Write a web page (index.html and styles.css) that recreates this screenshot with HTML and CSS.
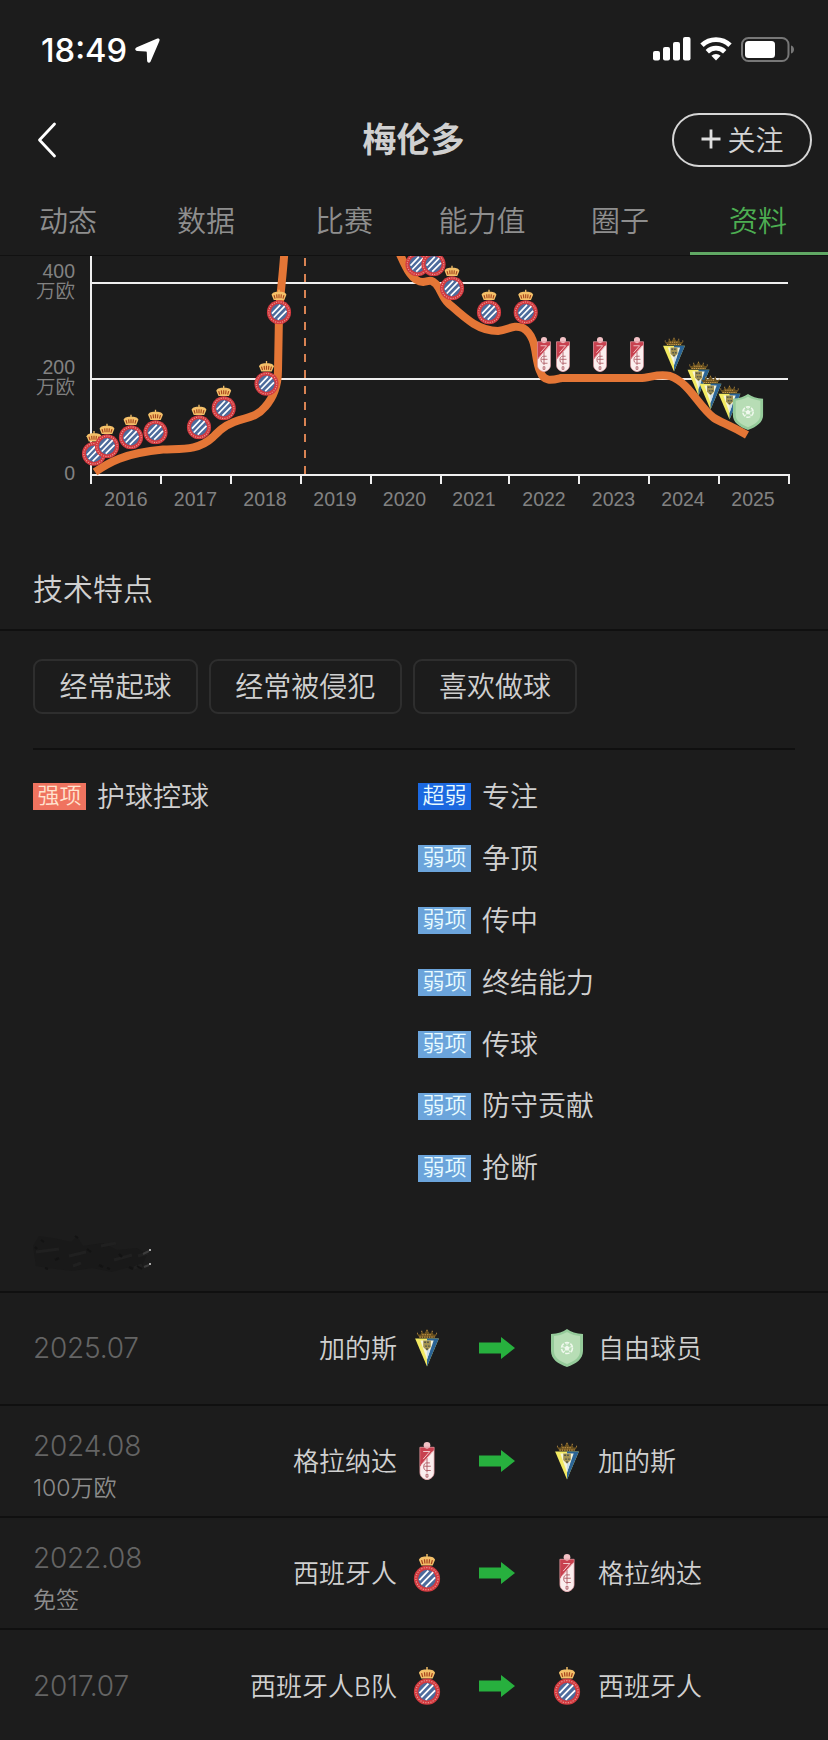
FILE: index.html
```html
<!DOCTYPE html>
<html lang="zh-CN">
<head>
<meta charset="utf-8">
<title>梅伦多</title>
<link rel="stylesheet" href="styles.css">
</head>
<body>
<svg class="defs" width="0" height="0" aria-hidden="true">
  <symbol id="espanyol" viewBox="0 0 28 40">
    <path d="M8 12 5.500 6C7 2.500 10 2.500 14 2.500s7 0 8.500 3.500L20 12Z" fill="#f4c069"/>
    <path d="M14 0v5" stroke="#f4c069" stroke-width="1.500"/>
    <path d="M9.500 10.500 8.300 6.500M11.800 10 11.300 5.500M14 10V5.500M16.200 10l.5-4.500M18.500 10.500l1.200-4" stroke="#a8441d" stroke-width="1.300" fill="none"/>
    <circle cx="14" cy="26" r="13.800" fill="#d33a40"/>
    <circle cx="14" cy="26" r="11.700" fill="none" stroke="#eaa39a" stroke-width="1.200" stroke-dasharray="1.200 1.500"/>
    <circle cx="14" cy="26" r="9.300" fill="#4c6b9c"/>
    <path d="M6 27.500 15.500 17.500M8 32 20.500 19M12.500 34.500 22.500 24.500" stroke="#fff" stroke-width="1.900"/>
  </symbol>
  <symbol id="granada" viewBox="0 0 16 40">
    <path d="M.5 5.500h15V32c0 4-3 7-7.500 8-4.500-1-7.500-4-7.500-8Z" fill="#fbeeee"/>
    <path d="M.5 5.500h15v3L.5 26Z" fill="#c8414f"/>
    <circle cx="8" cy="3.500" r="3.500" fill="#f2c1c5"/>
    <path d="M4 10h7L4 18M14 10 2 24" stroke="#f3cfd1" fill="none"/>
    <path d="M8 17v15M11 22H7.500c-4 0-4 8 0 8H12M5 25.500h7M7 34h2v3H7z" stroke="#a85059" stroke-width=".9" fill="none"/>
    <path d="M.5 5.500h15V32c0 4-3 7-7.500 7.500-4.500-.5-7.500-3.500-7.500-7.500Z" fill="none" stroke="#d98b93" stroke-width=".7"/>
  </symbol>
  <symbol id="cadiz" viewBox="0 0 26 40">
    <path d="M.5 10h25L13 39.500Z" fill="#f3ea62"/>
    <path d="M25.500 10H13v29.500Z" fill="#2b6496"/>
    <path d="M6 12h14l-7 20Z" fill="#f5f3da"/>
    <path d="M13 19v13l3-9Z" fill="#c9dded"/>
    <path d="M9 12h8v7l-4 4-4-4Z" fill="#a39250"/>
    <path d="M10 14h6M11 18h5M12 21h3" stroke="#55584a" stroke-width="1.500" stroke-dasharray="2 1"/>
    <path d="M5 9 2 5 6 6 7.500 2.500 10 5l3-4.500 3 4.500 2.500-2.500L20 6l4-1L21 9Z" fill="#6b5220"/>
    <path d="M5 8.500h16M2.500 4.500h1M7 2.500h1M12.500 1.500h1M18 2.500h1M22.500 4.500h1M8 6h10" stroke="#c9994a" stroke-width="1.200" stroke-dasharray="1.500 1"/>
  </symbol>
  <symbol id="free" viewBox="0 0 32 38">
    <path d="M16 0c4 3 9 4.500 16 5v17c0 8-7 13-16 16C7 35 0 30 0 22V5c7-.5 12-2 16-5Z" fill="#95cb9a"/>
    <path d="M16 3c4 2.500 8 3.500 13 4v15c0 6-5 10-13 13C8 32 3 28 3 22V7c5-.5 9-1.500 13-4Z" fill="#b7ddb5"/>
    <circle cx="16" cy="19" r="5.500" fill="none" stroke="#f0f9ee" stroke-width="1.600" stroke-dasharray="4.500 1.260"/>
    <path d="m16 16.500 2.600 1.900-1 3.100h-3.200l-1-3.100Z" fill="#f0f9ee"/>
    <path d="M16 14v2M11 17.500l2.500.8M21 17.500l-2.500.8M13 23l1-1.700M19 23l-1-1.700" stroke="#f0f9ee"/>
  </symbol>
  <symbol id="arrow" viewBox="0 0 36 22">
    <path d="M0 5.500h22V0l14 11-14 11v-5.500H0Z" fill="#27b03e"/>
  </symbol>
</svg>

<header class="status">
  <div class="clock">18:49
    <svg width="25" height="25" viewBox="0 0 25 25"><path d="M22.300.6 1.800 9.200C-.5 10.300-.2 12.600 2.200 12.900l8.600.6c.7.100 1 .4 1 1.100l.3 8.200c.2 2.400 2.700 2.700 3.600.5L24.400 2.900C25.100 1.100 24-.1 22.300.6Z" fill="#fff"/></svg>
  </div>
  <div class="indicators">
    <svg width="38" height="24" viewBox="0 0 38 24" fill="#fff"><rect y="14" width="7" height="9.500" rx="2"/><rect x="10" y="10" width="7" height="13.500" rx="2"/><rect x="20" y="5" width="7" height="18.500" rx="2"/><rect x="30" width="7.500" height="23.500" rx="2"/></svg>
    <svg width="32" height="24" viewBox="0 0 32 24" fill="none" stroke="#fff" stroke-width="4.800"><path d="M2 8.300a20 20 0 0 1 28 0"/><path d="M7.300 14.700a12.500 12.500 0 0 1 17.400 0"/><path d="m16 23.500-4.600-4.700a7 7 0 0 1 9.200 0Z" fill="#fff" stroke="none"/></svg>
    <svg width="54" height="25" viewBox="0 0 54 25"><rect x="1" y="1" width="46.500" height="23" rx="6.500" fill="none" stroke="#777" stroke-width="2"/><rect x="4" y="4" width="30" height="17" rx="3.500" fill="#fff"/><path d="M50 8.500c4 1 4 7 0 8Z" fill="#777"/></svg>
  </div>
</header>

<nav class="titlebar">
  <svg class="back" width="20" height="36" viewBox="0 0 20 36"><path d="M17.500 2 2.500 18l15 16" fill="none" stroke="#fff" stroke-width="2.800" stroke-linecap="round" stroke-linejoin="round"/></svg>
  <h1>梅伦多</h1>
  <button class="follow"><svg width="20" height="20" viewBox="0 0 20 20"><path d="M10 .5v19M.5 10h19" stroke="#e0e0e0" stroke-width="2.800"/></svg><span>关注</span></button>
</nav>

<nav class="tabs">
  <a>动态</a><a>数据</a><a>比赛</a><a>能力值</a><a>圈子</a><a class="active">资料</a>
</nav>

<section class="chart">
<svg width="828" height="264" viewBox="0 256 828 264">
  <path d="M91 256v228M91 283h697M91 379h697M91 475h699" stroke="#efefef" stroke-width="2" fill="none"/>
  <path d="M161 475v9M231 475v9M301 475v9M371 475v9M441 475v9M509 475v9M579 475v9M649 475v9M719 475v9M789 475v9" stroke="#efefef" stroke-width="2"/>
  <path d="M305 258v217" stroke="#d98353" stroke-width="2" stroke-dasharray="8 8"/>
  <g fill="none" stroke="#e47636" stroke-width="8">
    <path d="M95 472C108 463 124 453 163 449.500C181 448.500 198 451 213 437C219 431 224 426 234 422C246 417 256 418 265 407C274 397 278 386 278 370L279 315C280 295 283 275 284.500 250"/>
    <path d="M398 250C405 265 411 282 423 282C431 281 430 279 436 284C441 290 442 297 448 303C465 318 478 331 498 331C509 330 513 324 523 328C538 337 534 358 540 371C544 383 553 380 561 378H640C650 378 658 373 670 376C690 383 698 406 714 418C722 423 728 424 747 435"/>
  </g>
  <g id="pins">
    <use href="#espanyol" x="81.500" y="431" width="25" height="35"/>
    <use href="#espanyol" x="94.500" y="423.500" width="25" height="35"/>
    <use href="#espanyol" x="118.500" y="414.500" width="25" height="35"/>
    <use href="#espanyol" x="143" y="409.500" width="25" height="35"/>
    <use href="#espanyol" x="186.500" y="404.500" width="25" height="35"/>
    <use href="#espanyol" x="211.200" y="385.500" width="25" height="35"/>
    <use href="#espanyol" x="254" y="361" width="25" height="35"/>
    <use href="#espanyol" x="266.500" y="289.500" width="25" height="35"/>
    <use href="#espanyol" x="405" y="241.500" width="25" height="35"/>
    <use href="#espanyol" x="421" y="241.500" width="25" height="35"/>
    <use href="#espanyol" x="439.500" y="265.500" width="25" height="35"/>
    <use href="#espanyol" x="476.500" y="289.500" width="25" height="35"/>
    <use href="#espanyol" x="513.200" y="289.500" width="25" height="35"/>
    <use href="#granada" x="537" y="337" width="14" height="35"/>
    <use href="#granada" x="556" y="337" width="14" height="35"/>
    <use href="#granada" x="593" y="337" width="14" height="35"/>
    <use href="#granada" x="630" y="337" width="14" height="35"/>
    <use href="#cadiz" x="662.500" y="337" width="23" height="35"/>
    <use href="#cadiz" x="687" y="361" width="23" height="35"/>
    <use href="#cadiz" x="699" y="375" width="23" height="35"/>
    <use href="#cadiz" x="718" y="385" width="23" height="35"/>
    <use href="#free" x="732.500" y="394" width="31" height="36"/>
  </g>
  <g class="ylabels"><text x="75" y="278">400</text><text x="75" y="298">万欧</text><text x="75" y="374">200</text><text x="75" y="394">万欧</text><text x="75" y="480">0</text></g>
  <g class="xlabels"><text x="126" y="506">2016</text><text x="195.500" y="506">2017</text><text x="265" y="506">2018</text><text x="335" y="506">2019</text><text x="404.500" y="506">2020</text><text x="474" y="506">2021</text><text x="544" y="506">2022</text><text x="613.500" y="506">2023</text><text x="683" y="506">2024</text><text x="753" y="506">2025</text></g>
</svg>
</section>

<h2 class="heading">技术特点</h2>

<section class="traits">
  <div class="chips"><span>经常起球</span><span>经常被侵犯</span><span>喜欢做球</span></div>
  <div class="skills">
    <ul>
      <li><b class="strong">强项</b>护球控球</li>
    </ul>
    <ul>
      <li><b class="poor">超弱</b>专注</li>
      <li><b>弱项</b>争顶</li>
      <li><b>弱项</b>传中</li>
      <li><b>弱项</b>终结能力</li>
      <li><b>弱项</b>传球</li>
      <li><b>弱项</b>防守贡献</li>
      <li><b>弱项</b>抢断</li>
    </ul>
  </div>
</section>

<div class="smudge">
  <svg width="122" height="42" viewBox="0 0 122 42">
    <path d="M2 14 8 4l14 2 18 4 6-6 6 10 20-3 14 7 20-2 10 6-5 12-16 2-14 4-20-4-20 3-24-3-12-2Z" fill="#191919"/>
    <path d="M5 20 28 17M38 24l17-4M70 14l15-3M83 28l18-5M107 24l10-3M42 34l8-3M103 36l8-3" stroke="#202020" stroke-width="3"/>
    <path d="M10 8l3 2M4 15l2 2M24 28l4-2M44 4l3 2M56 17l4 3M68 33l4 2M88 22l3 3M98 35l4 2M76 36l3 1M14 36l3 1M106 34l5 3" stroke="#131313" stroke-width="2"/>
    <path d="m112 22 6-3M113 35l5-2" stroke="#3c3c3c" stroke-width="2"/>
    <path d="M118 18h2M118 32h2" stroke="#aaa" stroke-width="2"/>
  </svg>
</div>

<section class="transfers">
  <div class="row">
    <div class="when"><time>2025.07</time></div><span class="from">加的斯</span>
    <svg class="crest"><use href="#cadiz"/></svg><svg class="arrow"><use href="#arrow"/></svg><svg class="crest"><use href="#free"/></svg>
    <span class="to">自由球员</span>
  </div>
  <div class="row">
    <div class="when"><time>2024.08</time><small>100万欧</small></div><span class="from">格拉纳达</span>
    <svg class="crest"><use href="#granada"/></svg><svg class="arrow"><use href="#arrow"/></svg><svg class="crest"><use href="#cadiz"/></svg>
    <span class="to">加的斯</span>
  </div>
  <div class="row">
    <div class="when"><time>2022.08</time><small>免签</small></div><span class="from">西班牙人</span>
    <svg class="crest"><use href="#espanyol"/></svg><svg class="arrow"><use href="#arrow"/></svg><svg class="crest"><use href="#granada"/></svg>
    <span class="to">格拉纳达</span>
  </div>
  <div class="row">
    <div class="when"><time>2017.07</time></div><span class="from">西班牙人B队</span>
    <svg class="crest"><use href="#espanyol"/></svg><svg class="arrow"><use href="#arrow"/></svg><svg class="crest"><use href="#espanyol"/></svg>
    <span class="to">西班牙人</span>
  </div>
</section>
</body>
</html>
```
FILE: styles.css
```css
* { box-sizing: border-box; }
body {
  margin: 0;
  width: 828px;
  height: 1740px;
  overflow: hidden;
  background: #1c1c1c;
  color: #d0d0d0;
  font-family: Inter, "Noto Sans CJK SC", sans-serif;
  font-weight: 350;
}
svg { display: block; flex: none; }
.defs { display: none; }
.status {
  height: 100px;
  display: flex;
  justify-content: space-between;
  padding: 0 33px 0 41px;
}
.clock {
  display: flex;
  align-items: center;
  gap: 8px;
  height: 100px;
  font: 550 32.700px/1 Inter, sans-serif;
  color: #fff;
}
.indicators { display: flex; gap: 9px; padding-top: 37px; }
.titlebar {
  height: 84px;
  padding: 0 16px 4px 37px;
  display: grid;
  grid-template-columns: 140px 1fr 140px;
  align-items: center;
}
.titlebar h1 {
  margin: 0;
  padding-right: 22px;
  text-align: center;
  font-size: 34px;
  font-weight: 600;
  line-height: 50px;
}
.follow {
  width: 140px;
  height: 54px;
  padding: 0 0 2px 1px;
  border: 2px solid #d6d6d6;
  border-radius: 27px;
  background: none;
  display: flex;
  align-items: center;
  justify-content: center;
  gap: 6px;
  color: #d4d4d4;
  font: 350 28px/40px "Noto Sans CJK SC", sans-serif;
}
.tabs {
  height: 72px;
  display: grid;
  grid-template-columns: repeat(6, 138px);
  border-bottom: 1px solid #111;
}
.tabs a {
  height: 71px;
  padding: 17px 2px 0 0;
  text-align: center;
  font-size: 29px;
  line-height: 42px;
  color: #8e8e8e;
}
.tabs .active { color: #4dae52; border-bottom: 3px solid #60a864; }
.chart { height: 264px; }
.chart text {
  font-family: "Liberation Sans", "Noto Sans CJK SC", sans-serif;
  font-size: 19.500px;
  fill: #828282;
}
.ylabels { text-anchor: end; }
.xlabels { text-anchor: middle; }
.heading {
  margin: 0;
  height: 111px;
  padding: 47px 33px 0;
  border-bottom: 2px solid #101010;
  font-size: 30px;
  font-weight: 350;
  line-height: 44px;
}
.traits { padding: 28px 33px 0; }
.chips { display: flex; gap: 11px; height: 91px; border-bottom: 2px solid #101010; }
.chips span {
  height: 55px;
  padding: 0 24.400px;
  border: 2px solid #2e2e2e;
  border-radius: 9px;
  font-size: 28px;
  line-height: 53px;
}
.skills { display: grid; grid-template-columns: 385px 1fr; padding-top: 16px; }
.skills ul { margin: 0; padding: 0; list-style: none; }
.skills li {
  height: 61.900px;
  display: flex;
  align-items: center;
  gap: 11px;
  font-size: 28px;
  line-height: 38px;
}
.skills b {
  width: 53px;
  height: 27px;
  background: #6ba4db;
  color: #e8fbff;
  text-align: center;
  font-size: 22px;
  font-weight: 350;
  line-height: 24px;
}
.skills .strong { background: #ef735f; color: #ffe3cf; }
.skills .poor { background: #1b68e0; }
.smudge { height: 92px; padding: 33px 0 0 31px; }
.transfers { border-top: 2px solid #101010; }
.row {
  height: 112.300px;
  padding-left: 33px;
  display: grid;
  grid-template-columns: 110px 254px 60px 80px 60px 1fr;
  align-items: center;
  border-bottom: 2px solid #101010;
}
.row:last-child { border: 0; }
.when { color: #646464; }
.when time {
  display: block;
  font-size: 28px;
  font-weight: 350;
  letter-spacing: -.2px;
  line-height: 40px;
}
.when small {
  display: block;
  margin: 5px 0 -9px;
  font-size: 23px;
  line-height: 34px;
  color: #8c8c8c;
}
.from, .to { font-size: 26px; white-space: nowrap; padding-bottom: 3px; }
.from { text-align: right; }
.to { padding-left: 1px; }
.crest { width: 32px; height: 38px; justify-self: center; }
.arrow { width: 36px; height: 22px; justify-self: center; }
```
